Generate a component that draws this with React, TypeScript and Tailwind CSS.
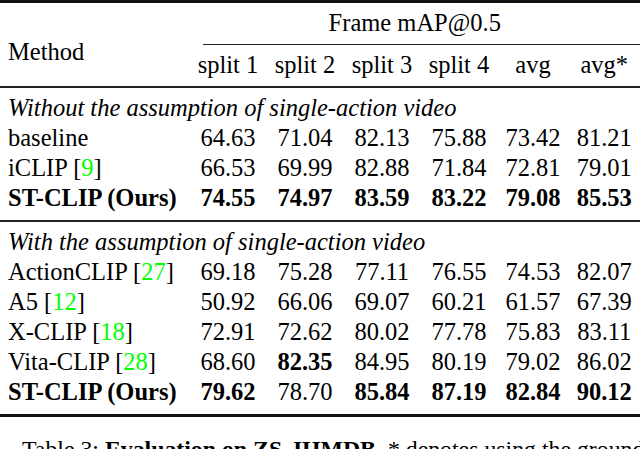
import React from "react";

type Cell = { v: string; b?: boolean };
type Row = { name: string; cite?: string; bold?: boolean; cells: Cell[] };

const c = (v: string, b?: boolean): Cell => ({ v, b });

const sec1: Row[] = [
  { name: "baseline", cells: [c("64.63"), c("71.04"), c("82.13"), c("75.88"), c("73.42"), c("81.21")] },
  { name: "iCLIP", cite: "9", cells: [c("66.53"), c("69.99"), c("82.88"), c("71.84"), c("72.81"), c("79.01")] },
  {
    name: "ST-CLIP (Ours)",
    bold: true,
    cells: [c("74.55", true), c("74.97", true), c("83.59", true), c("83.22", true), c("79.08", true), c("85.53", true)],
  },
];

const sec2: Row[] = [
  { name: "ActionCLIP", cite: "27", cells: [c("69.18"), c("75.28"), c("77.11"), c("76.55"), c("74.53"), c("82.07")] },
  { name: "A5", cite: "12", cells: [c("50.92"), c("66.06"), c("69.07"), c("60.21"), c("61.57"), c("67.39")] },
  { name: "X-CLIP", cite: "18", cells: [c("72.91"), c("72.62"), c("80.02"), c("77.78"), c("75.83"), c("83.11")] },
  { name: "Vita-CLIP", cite: "28", cells: [c("68.60"), c("82.35", true), c("84.95"), c("80.19"), c("79.02"), c("86.02")] },
  {
    name: "ST-CLIP (Ours)",
    bold: true,
    cells: [c("79.62", true), c("78.70"), c("85.84", true), c("87.19", true), c("82.84", true), c("90.12", true)],
  },
];

const grid = "grid grid-cols-[189.5px_77px_77px_77px_77px_71px_71.5px]";

function Section({ title, rows }: { title: string; rows: Row[] }) {
  return (
    <div className={`${grid} pt-[4.7px] pb-[7.3px]`}>
      <div className="col-span-7 h-[30px] leading-[30px] pl-2 italic whitespace-nowrap">{title}</div>
      {rows.map((r, i) => (
        <React.Fragment key={i}>
          <div className={`h-[30px] leading-[30px] pl-2 whitespace-nowrap ${r.bold ? "font-bold" : ""}`}>
            {r.name}
            {r.cite && (
              <>
                {" ["}
                <span className="text-[#00ff00]">{r.cite}</span>
                {"]"}
              </>
            )}
          </div>
          {r.cells.map((cell, j) => (
            <div key={j} className={`h-[30px] leading-[30px] text-center whitespace-nowrap ${cell.b ? "font-bold" : ""}`}>
              {cell.v}
            </div>
          ))}
        </React.Fragment>
      ))}
    </div>
  );
}

export default function App() {
  const heads = ["split 1", "split 2", "split 3", "split 4", "avg", "avg*"];
  return (
    <div
      className="w-[640px] h-[449px] overflow-hidden bg-white text-black text-[24.5px]"
      style={{ fontFamily: '"Liberation Serif", "Times New Roman", serif' }}
    >
      <div className="h-[3px] bg-[#111]" />
      <div className={`${grid} pt-[4.7px] pb-[6.3px]`}>
        <div className="row-span-3 pl-2 pt-[29px] leading-[30px]">Method</div>
        <div className="col-span-6 h-[30px] leading-[30px] text-center whitespace-nowrap">Frame mAP@0.5</div>
        <div className="col-span-6 pt-[6.3px] pb-[4.7px]">
          <div className="h-px bg-[#222] ml-[13.5px]" />
        </div>
        {heads.map((h) => (
          <div key={h} className="h-[30px] leading-[30px] text-center whitespace-nowrap">
            {h}
          </div>
        ))}
      </div>
      <div className="h-[2px] bg-[#222]" />
      <Section title="Without the assumption of single-action video" rows={sec1} />
      <div className="h-[2px] bg-[#222]" />
      <Section title="With the assumption of single-action video" rows={sec2} />
      <div className="h-[3px] bg-[#111]" />
      <div className="mt-[17px] pl-[22px] h-[30px] leading-[30px] text-[23.8px] whitespace-nowrap">
        Table 3: <span className="font-bold">Evaluation on ZS-JHMDB.</span> * denotes using the ground
      </div>
    </div>
  );
}
